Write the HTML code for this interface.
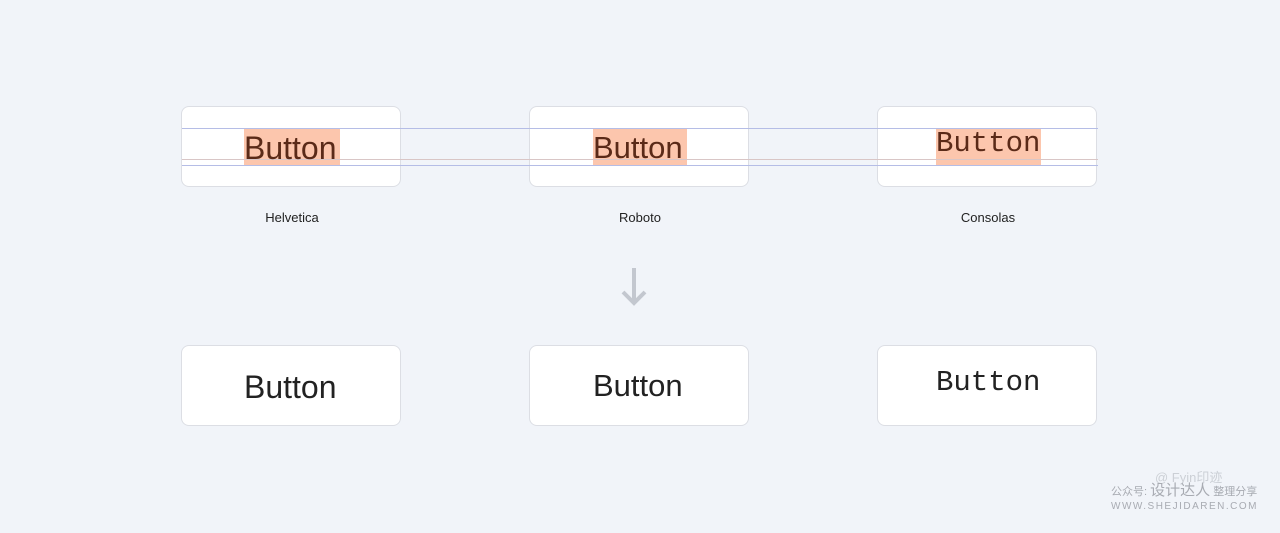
<!DOCTYPE html>
<html><head><meta charset="utf-8"><style>
body{margin:0;width:1280px;height:533px;background:#f1f4f9;position:relative;overflow:hidden;font-family:"Liberation Sans",sans-serif}
.card{position:absolute;width:218px;height:79px;background:#fff;border:1px solid #dcdee4;border-radius:8px}
.hl{position:absolute;top:128px;height:37px;background:#fcc6ad}
.t{position:absolute;color:#5a2a18;white-space:nowrap;line-height:1}
.b{position:absolute;color:#222;white-space:nowrap;line-height:1}
.line{position:absolute;left:182px;width:916px;height:1px}
.lab{position:absolute;top:210px;font-size:13px;color:#222;width:220px;text-align:center;font-weight:bold;-webkit-text-stroke:0}
</style></head><body>
<div class="card" style="left:181px;top:106px"></div>
<div class="card" style="left:529px;top:106px"></div>
<div class="card" style="left:877px;top:106px"></div>
<div class="hl" style="left:244px;width:96px"></div>
<div class="hl" style="left:593px;width:94px"></div>
<div class="hl" style="left:936px;width:105px"></div>
<div class="line" style="top:128px;background:#b5bde6"></div>
<div class="line" style="top:159px;background:#d9c6c6"></div>
<div class="line" style="top:165px;background:#b5bde6"></div>
<div class="t" style="left:244px;top:132px;font-size:32px">Button</div>
<div class="t" style="left:593px;top:132px;font-size:31px">Button</div>
<div class="t" style="left:936px;top:129px;font-size:29px;font-family:'Liberation Mono',monospace">Button</div>
<div class="lab" style="left:182px;font-weight:normal;font-size:13px">Helvetica</div>
<div class="lab" style="left:530px;font-weight:normal;font-size:13px">Roboto</div>
<div class="lab" style="left:878px;font-weight:normal;font-size:13px">Consolas</div>
<svg style="position:absolute;left:615px;top:264px" width="40" height="44"><path d="M19 4V38M8 28L19 39L30 28" fill="none" stroke="#c3c7cf" stroke-width="4"/></svg>
<div class="card" style="left:181px;top:345px"></div>
<div class="card" style="left:529px;top:345px"></div>
<div class="card" style="left:877px;top:345px"></div>
<div class="b" style="left:244px;top:371px;font-size:32px">Button</div>
<div class="b" style="left:593px;top:370px;font-size:31px">Button</div>
<div class="b" style="left:936px;top:368px;font-size:29px;font-family:'Liberation Mono',monospace">Button</div>
<div style="position:absolute;left:1155px;top:471px;font-size:13px;color:#ccd0d6;font-family:'Liberation Sans','Noto Sans CJK SC',sans-serif;line-height:1">@ Fyin印迹</div>
<div style="position:absolute;left:1111px;top:483px;font-size:11px;color:#a8abb2;font-family:'Liberation Sans','Noto Sans CJK SC',sans-serif;white-space:nowrap;line-height:16px">公众号: <span style="font-size:15px">设计达人</span> 整理分享</div>
<div style="position:absolute;left:1111px;top:501px;font-size:10px;letter-spacing:1.5px;color:#a8abb2;line-height:12px">WWW.SHEJIDAREN.COM</div>
</body></html>
